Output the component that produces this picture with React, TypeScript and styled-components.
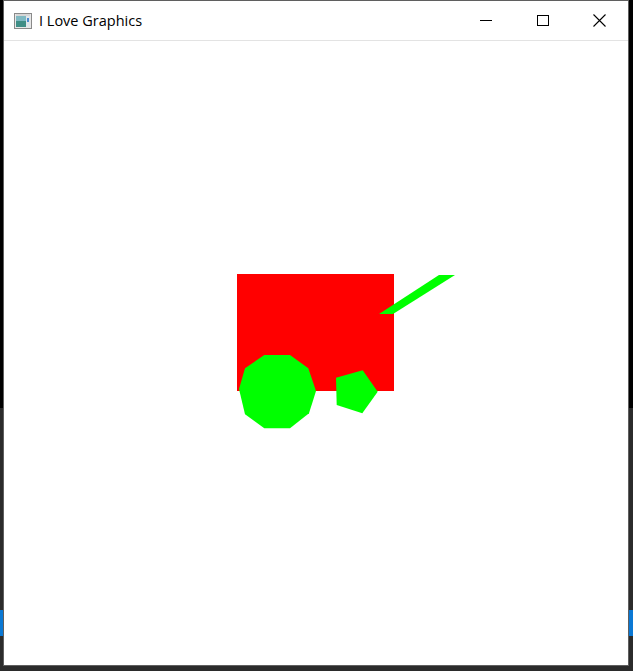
import styled, { createGlobalStyle } from 'styled-components';

const GlobalStyle = createGlobalStyle`
  html, body {
    margin: 0;
    padding: 0;
    overflow: hidden;
  }
`;

const Desktop = styled.div`
  width: 633px;
  height: 671px;
  display: flex;
  align-items: flex-start;
  padding-left: 3px;
  box-sizing: border-box;
  background: linear-gradient(
    to bottom,
    #000 0 408px,
    #2b2b2b 408px 610px,
    #0a78d4 610px 636px,
    #2b2b2b 636px
  );
`;

const Window = styled.div`
  width: 626px;
  height: 666px;
  box-sizing: border-box;
  border: 1px solid #5f5f5f;
  background: #fff;
  display: flex;
  flex-direction: column;
`;

const TitleBar = styled.div`
  height: 40px;
  flex-shrink: 0;
  display: flex;
  align-items: center;
  border-bottom: 1px solid #e3e3e3;
  box-sizing: border-box;
`;

const AppIcon = styled.svg`
  margin-left: 10px;
  width: 18px;
  height: 16px;
  flex-shrink: 0;
`;

const Title = styled.span`
  margin-left: 7px;
  flex: 1;
  font-family: 'Open Sans', 'Noto Sans', sans-serif;
  font-size: 14.5px;
  color: #000;
  padding-bottom: 1px;
`;

const Controls = styled.div`
  display: flex;
  height: 100%;
`;

const ControlButton = styled.div`
  width: 57px;
  height: 100%;
  display: flex;
  align-items: center;
  justify-content: center;

  > svg {
    display: block;
  }
`;

const Canvas = styled.svg`
  flex: 1;
  display: block;
  width: 100%;
`;

export default function App() {
  return (
    <>
      <GlobalStyle />
      <Desktop>
        <Window>
          <TitleBar>
            <AppIcon viewBox="0 0 18 16">
              <rect x="0.5" y="0.5" width="17" height="15" fill="#e8e8e8" stroke="#8a8a8a" />
              <rect x="2" y="3" width="10" height="11" fill="#3f8e86" />
              <rect x="2" y="3" width="10" height="5" fill="#7fb9c2" />
              <rect x="12" y="3" width="4" height="11" fill="#dfe6ea" />
              <rect x="13" y="5" width="2" height="4" fill="#4a8ad0" />
              <rect x="2" y="1.5" width="14" height="1" fill="#c4c4c4" />
            </AppIcon>
            <Title>I Love Graphics</Title>
            <Controls>
              <ControlButton>
                <svg width="12" height="12" viewBox="0 0 12 12">
                  <rect x="0" y="5" width="12" height="1" fill="#000" />
                </svg>
              </ControlButton>
              <ControlButton>
                <svg width="12" height="12" viewBox="0 0 12 12">
                  <rect x="0.5" y="0.5" width="11" height="10" fill="none" stroke="#000" />
                </svg>
              </ControlButton>
              <ControlButton>
                <svg width="13" height="13" viewBox="0 0 13 13">
                  <path d="M0.5 0.5 L12.5 12.5 M12.5 0.5 L0.5 12.5" stroke="#000" strokeWidth="1.1" fill="none" />
                </svg>
              </ControlButton>
            </Controls>
          </TitleBar>
          <Canvas viewBox="0 0 624 624" preserveAspectRatio="xMinYMin meet">
            <rect x="233" y="233" width="157" height="117" fill="#ff0000" shapeRendering="crispEdges" />
            <polygon points="375,273 389,273 451,234 435,234" fill="#00ff00" />
            <polygon
              points="260.3,314 286,314 304.3,327.3 312,350 305,372.3 286,387.3 260.3,387.3 241,373.3 235,348 241,327.3"
              fill="#00ff00"
            />
            <polygon points="332,336.7 358.7,329.3 373.7,350.7 358.3,372.3 332.7,364" fill="#00ff00" />
          </Canvas>
        </Window>
      </Desktop>
    </>
  );
}
